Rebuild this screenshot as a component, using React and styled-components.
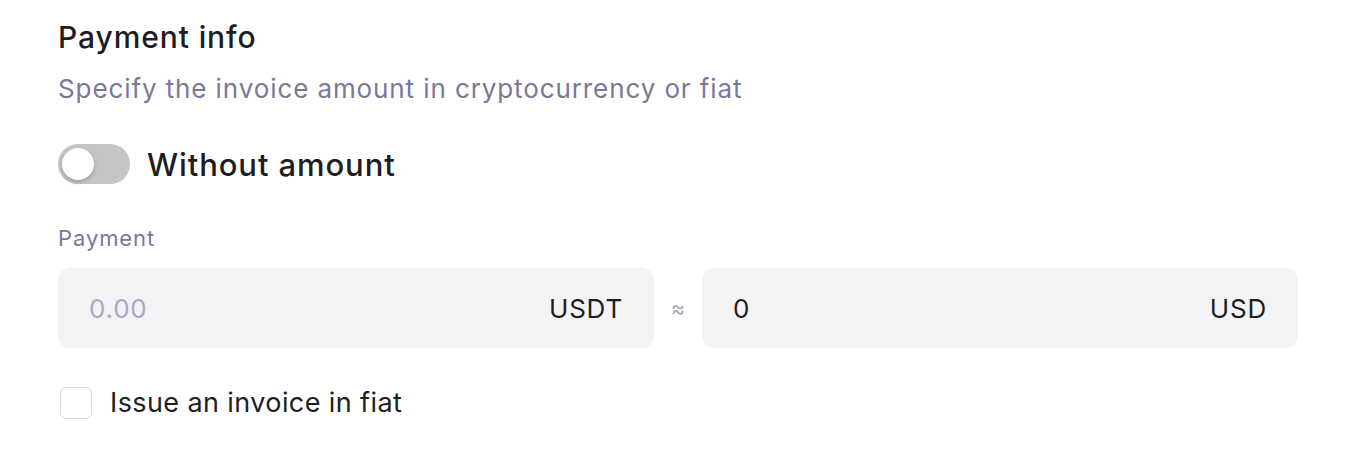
import React, { useState } from "react";
import styled, { createGlobalStyle } from "styled-components";

const GlobalStyle = createGlobalStyle`
  body {
    margin: 0;
    background: #ffffff;
    font-family: Inter, "Noto Sans", sans-serif;
    color: #1f1f23;
  }
`;

const Section = styled.section`
  width: 1240px;
  padding: 18px 0 0 58px;
  display: flex;
  flex-direction: column;
`;

const Title = styled.h2`
  margin: 0;
  font-size: 30px;
  font-weight: 500;
  line-height: 38px;
  letter-spacing: 0.9px;
  color: #1e1e22;
`;

const Subtitle = styled.p`
  margin: 16px 0 0;
  font-size: 26px;
  line-height: 34px;
  letter-spacing: 0.9px;
  color: #7a7899;
`;

const ToggleRow = styled.label`
  display: flex;
  align-items: center;
  gap: 17px;
  margin-top: 38px;
  cursor: pointer;
`;

const Track = styled.span`
  position: relative;
  width: 72px;
  height: 40px;
  border-radius: 20px;
  background: ${(p) => (p.$on ? "#5b5bd6" : "#c5c5c5")};
  flex-shrink: 0;
`;

const Knob = styled.span`
  position: absolute;
  top: 4px;
  left: ${(p) => (p.$on ? "36px" : "4px")};
  width: 32px;
  height: 32px;
  border-radius: 50%;
  background: #ffffff;
  box-shadow: 0 2px 4px rgba(0, 0, 0, 0.22);
`;

const ToggleText = styled.span`
  font-size: 31px;
  font-weight: 500;
  color: #1e1e22;
  letter-spacing: 0.9px;
`;

const FieldLabel = styled.div`
  margin-top: 40px;
  font-size: 22px;
  line-height: 28px;
  letter-spacing: 0.9px;
  color: #7a7899;
`;

const Inputs = styled.div`
  display: grid;
  grid-template-columns: 1fr 48px 1fr;
  align-items: center;
  margin-top: 16px;
`;

const Field = styled.div`
  height: 80px;
  border-radius: 12px;
  background: #f3f3f5;
  display: flex;
  align-items: center;
  padding: 0 31px;
`;

const Value = styled.span`
  flex: 1;
  font-size: 26px;
  letter-spacing: 0.8px;
  color: ${(p) => (p.$placeholder ? "#a9a8c6" : "#1e1e22")};
`;

const Unit = styled.span`
  font-size: 26px;
  letter-spacing: 0.8px;
  color: #1e1e22;
`;

const Approx = styled.span`
  text-align: center;
  font-size: 22px;
  color: #a9a8c6;
`;

const CheckRow = styled.label`
  display: flex;
  align-items: center;
  gap: 18px;
  margin-top: 38px;
  padding-left: 2px;
  cursor: pointer;
`;

const Box = styled.span`
  width: 30px;
  height: 30px;
  border: 1.5px solid #dadada;
  border-radius: 6px;
  background: #ffffff;
`;

const CheckText = styled.span`
  font-size: 27px;
  letter-spacing: 0.4px;
  color: #1e1e22;
`;

const App = () => {
  const [on, setOn] = useState(false);

  return (
    <>
      <GlobalStyle />
      <Section>
        <Title>Payment info</Title>
        <Subtitle>Specify the invoice amount in cryptocurrency or fiat</Subtitle>

        <ToggleRow onClick={() => setOn(!on)}>
          <Track $on={on}>
            <Knob $on={on} />
          </Track>
          <ToggleText>Without amount</ToggleText>
        </ToggleRow>

        <FieldLabel>Payment</FieldLabel>
        <Inputs>
          <Field>
            <Value $placeholder>0.00</Value>
            <Unit>USDT</Unit>
          </Field>
          <Approx>≈</Approx>
          <Field>
            <Value>0</Value>
            <Unit>USD</Unit>
          </Field>
        </Inputs>

        <CheckRow>
          <Box />
          <CheckText>Issue an invoice in fiat</CheckText>
        </CheckRow>
      </Section>
    </>
  );
};

export default App;
